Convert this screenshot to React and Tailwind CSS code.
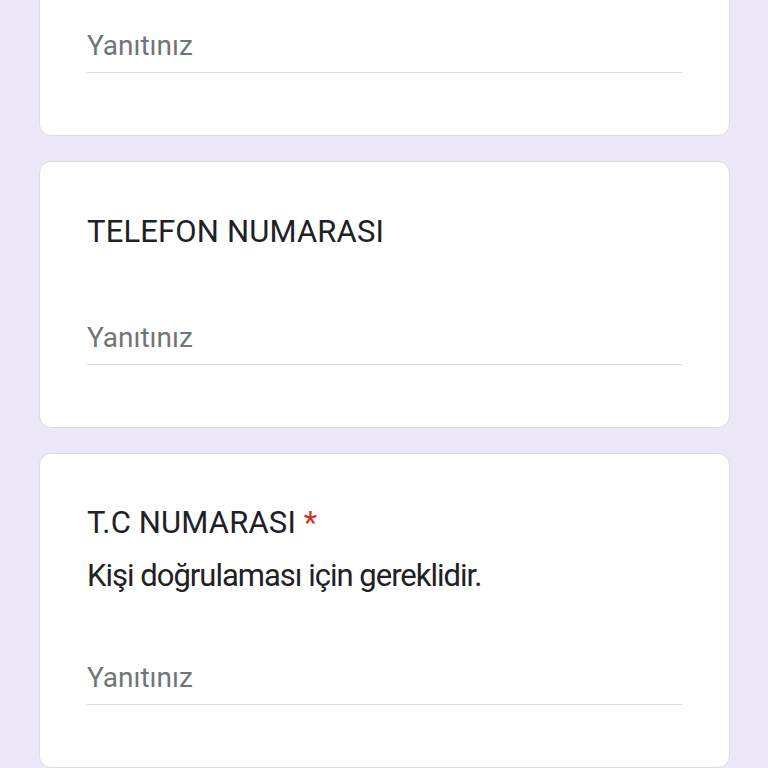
export default function App() {
  const Answer = () => (
    <div className="border-b border-[#dadce0] pt-[2px] pb-[8px] text-[28px] leading-[36px] text-[#70757a]">
      Yanıtınız
    </div>
  );
  return (
    <div
      className="min-h-[768px] h-[768px] overflow-hidden bg-[#ece8f7] pl-[39px] pr-[38px]"
      style={{ fontFamily: "Roboto, 'Noto Sans', sans-serif" }}
    >
      <div className="-mt-[100px] flex flex-col gap-[25px]">
        <div className="rounded-[12px] border border-[#dadce0] bg-white px-[47px] pt-[125px] pb-[62px]">
          <Answer />
        </div>
        <div className="rounded-[12px] border border-[#dadce0] bg-white px-[47px] pt-[46px] pb-[62px]">
          <div className="text-[31px] leading-[48px] tracking-[0.15px] text-[#202124]">TELEFON NUMARASI</div>
          <div className="mt-[62px]">
            <Answer />
          </div>
        </div>
        <div className="rounded-[12px] border border-[#dadce0] bg-white px-[47px] pt-[45px] pb-[62px]">
          <div className="text-[31px] leading-[48px] tracking-[0.15px] text-[#202124]">
            T.C NUMARASI <span className="text-[#d93025]">*</span>
          </div>
          <div className="mt-[5px] text-[31px] leading-[48px] tracking-[-1px] text-[#202124]">
            Kişi doğrulaması için gereklidir.
          </div>
          <div className="mt-[58px]">
            <Answer />
          </div>
        </div>
      </div>
    </div>
  );
}
